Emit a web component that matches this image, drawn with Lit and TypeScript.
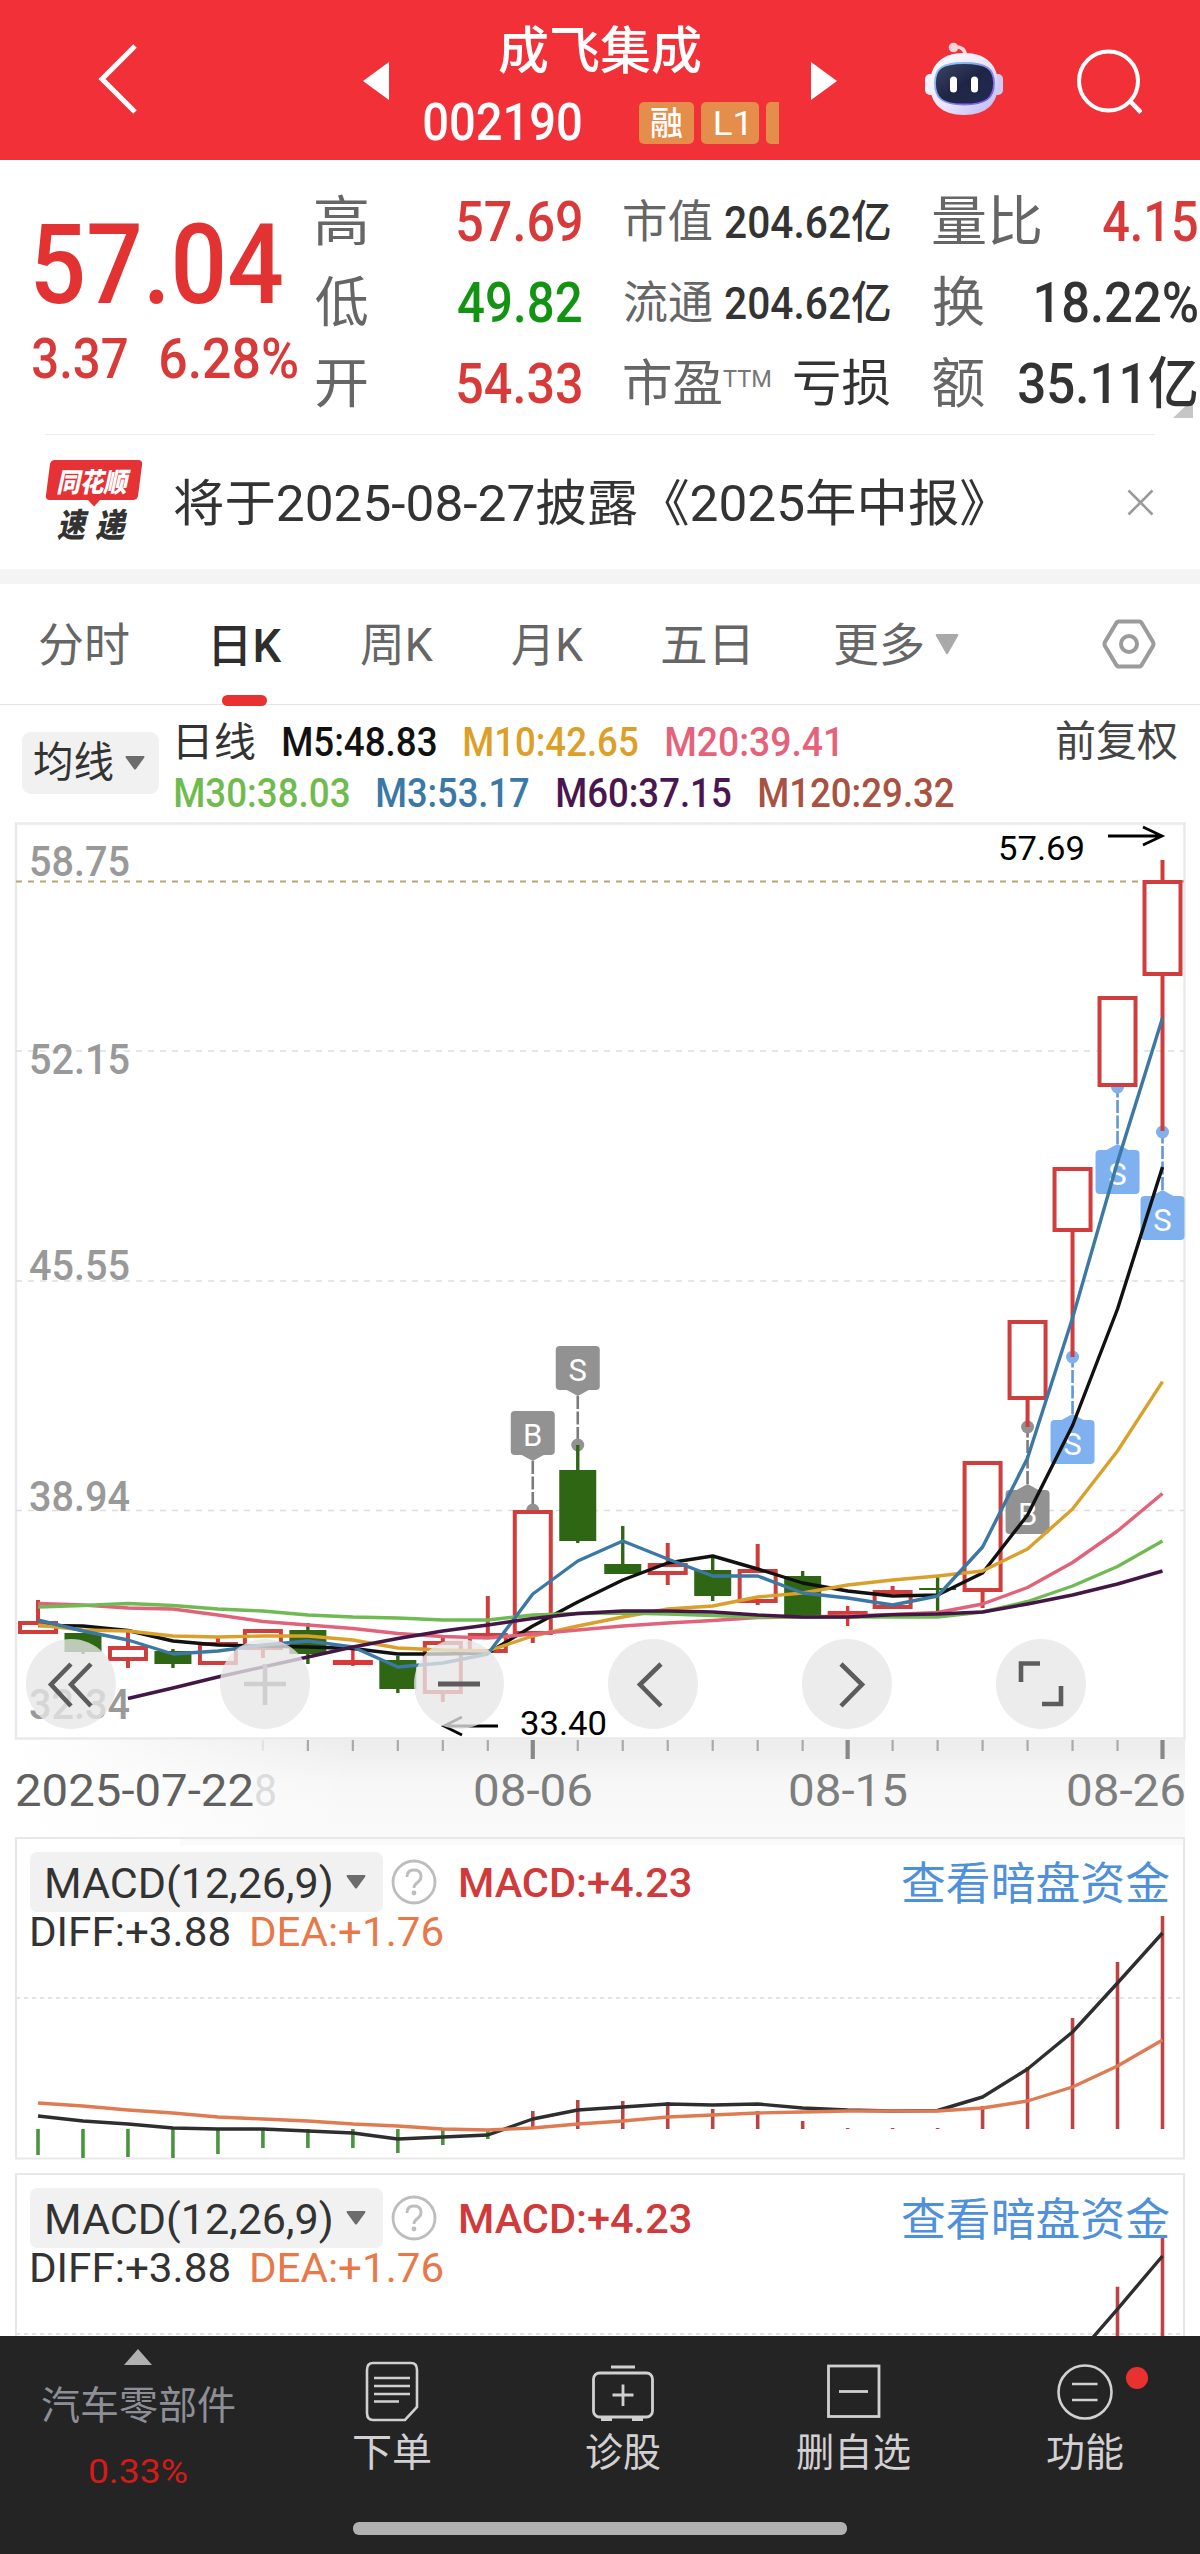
import { LitElement, html, svg, css, nothing } from "lit";
import { customElement, property, query } from "lit/decorators.js";

/** Text whose visible glyphs span exactly `w` pixels, starting at the box's left edge. */
@customElement("fit-text")
class FitText extends LitElement {
  @property() text = "";
  @property({ type: Number }) w = 100;
  @query("span") inner!: HTMLElement;

  static styles = css`
    :host { display: block; flex: none; white-space: nowrap; }
    span { display: inline-block; transform-origin: 0 50%; }
  `;

  updated() {
    this.style.width = this.w + "px";
    const cs = getComputedStyle(this);
    const ctx = document.createElement("canvas").getContext("2d")!;
    ctx.font = `${cs.fontStyle} ${cs.fontWeight} ${cs.fontSize} ${cs.fontFamily}`;
    const m = ctx.measureText(this.text);
    const ink = m.actualBoundingBoxLeft + m.actualBoundingBoxRight;
    const s = this.w / ink;
    this.inner.style.transform = `translateX(${m.actualBoundingBoxLeft * s}px) scaleX(${s})`;
    this.inner.style.marginRight = "-2000px";
  }

  render() {
    return html`<span>${this.text}</span>`;
  }
}

const t = (text: string, w: number, cls = "") => html`<fit-text class=${cls} .text=${text} .w=${w}></fit-text>`;

const X = (i: number) => 38 + 44.98 * i;
const line = (ys: number[], color: string, start = 0) =>
  svg`<polyline fill="none" stroke=${color} stroke-width="3.4" stroke-linejoin="round" points=${ys.map((y, i) => `${X(i + start)},${y}`).join(" ")} />`;

// kind, body top, body bottom, wick top, wick bottom
type Candle = ["r" | "g" | "f", number, number, number, number];
const candles: Candle[] = [
  ["r", 1621, 1634, 1600, 1634], ["g", 1633, 1652, 1633, 1654], ["r", 1646, 1661, 1632, 1668],
  ["g", 1651, 1664, 1649, 1668], ["r", 1642, 1665, 1638, 1665], ["r", 1629, 1650, 1629, 1658],
  ["g", 1630, 1654, 1623, 1664], ["f", 1660, 1665, 1648, 1666], ["g", 1660, 1689, 1656, 1693],
  ["r", 1641, 1694, 1636, 1702], ["r", 1633, 1653, 1596, 1653], ["r", 1510, 1635, 1510, 1643],
  ["g", 1470, 1541, 1445, 1543], ["g", 1564, 1574, 1526, 1574], ["r", 1563, 1575, 1543, 1585],
  ["g", 1570, 1596, 1556, 1601], ["r", 1569, 1603, 1544, 1605], ["g", 1576, 1616, 1571, 1616],
  ["f", 1611, 1616, 1606, 1626], ["r", 1590, 1609, 1586, 1609], ["g", 1588, 1590, 1576, 1613],
  ["r", 1461, 1592, 1461, 1608], ["r", 1320, 1400, 1320, 1427], ["r", 1167, 1232, 1167, 1357],
  ["r", 996, 1087, 996, 1087], ["r", 880, 976, 860, 1131],
];

const ma3 = [1620, 1631, 1640, 1654, 1651, 1645, 1641, 1647, 1667, 1663, 1654, 1594, 1561, 1541, 1559, 1576, 1576, 1593, 1598, 1605, 1596, 1547, 1458, 1318, 1162, 1018];
const ma5 = [1625.5, 1626, 1630.5, 1641, 1645, 1646, 1647, 1648.5, 1654, 1654, 1653, 1626, 1602, 1580, 1563, 1556, 1569, 1583, 1591, 1596, 1595, 1573, 1515, 1425.5, 1309, 1167];
const ma10 = [1625, 1630, 1631, 1636, 1637, 1636, 1636, 1640, 1648, 1650, 1651, 1636, 1626, 1617, 1609, 1606, 1597, 1593, 1585, 1580, 1576, 1571, 1549, 1509, 1451, 1381.6];
const ma20 = [1603.5, 1605, 1608, 1609, 1615, 1621.5, 1625, 1628.5, 1633.5, 1636.5, 1638, 1634, 1630, 1626, 1623, 1620.5, 1617.5, 1617, 1616, 1614.5, 1612.5, 1604, 1587.5, 1562.5, 1531, 1493.5];
const ma30 = [1607, 1605.5, 1603.5, 1605.5, 1609, 1611, 1615, 1617, 1618, 1620, 1620, 1615, 1613.5, 1613, 1614, 1615.5, 1617, 1617, 1617, 1617, 1617, 1612, 1601.5, 1586, 1566.5, 1541];
const ma60 = [1698.5, 1688, 1677, 1667, 1657, 1647, 1638.5, 1631, 1625, 1618.5, 1613.5, 1611, 1611, 1612, 1615, 1617, 1617, 1614.7, 1614, 1612, 1604, 1595, 1584, 1571];

const macdBars = [2155, 2158, 2157, 2158, 2154, 2148, 2148, 2148, 2153, 2145, 2139, 2111, 2100, 2101, 2102, 2109, 2111, 2121, 2128, 2128, 2128, 2106, 2067, 2018, 1962, 1916];
const diff = [2116, 2121, 2124, 2128, 2129, 2129, 2131, 2133, 2139, 2137, 2135, 2119, 2110, 2107, 2104, 2105, 2104, 2108, 2110, 2111, 2110.5, 2097, 2069, 2032, 1983, 1933];
const dea = [2103, 2106, 2110, 2113, 2117, 2119, 2121, 2124, 2126, 2129, 2130, 2128, 2124, 2121, 2117, 2115, 2113, 2112, 2111, 2111, 2111, 2108, 2101, 2087, 2066, 2040];

const RED = "#cf3e3c";
const GREEN = "#2f6613";

function candle([kind, top, bottom, high, low]: Candle, i: number) {
  const x = X(i);
  if (kind === "r") {
    return svg`<path d="M${x} ${high}V${top}M${x} ${bottom}V${low}" stroke=${RED} stroke-width="4" />
      <rect x=${x - 18} y=${top + 2} width="36" height=${bottom - top - 4} fill="#fff" stroke=${RED} stroke-width="4" />`;
  }
  const color = kind === "g" ? GREEN : "#dc3636";
  const half = kind === "g" ? 18.5 : 20;
  return svg`<path d="M${x} ${high}V${low}" stroke=${color} stroke-width="3.4" />
    <rect x=${x - half} y=${top} width=${half * 2} height=${bottom - top} fill=${color} />`;
}

function marker(i: number, letter: string, dot: number, boxTop: number, color: string, stem: string) {
  const x = X(i);
  const below = boxTop > dot;
  const edge = below ? boxTop : boxTop + 44;
  const tip = below ? boxTop - 6 : boxTop + 50;
  return svg`<path d="M${x} ${tip}V${dot}" stroke=${stem} stroke-width="2.6" stroke-dasharray="13 2.5" />
    <circle cx=${x} cy=${dot} r="6.5" fill=${color} />
    <rect x=${x - 22} y=${boxTop} width="44" height="44" rx="4" fill=${color} />
    <path d="M${x - 11} ${edge}L${x} ${tip}L${x + 11} ${edge}Z" fill=${color} />
    <text x=${x} y=${boxTop + 35} text-anchor="middle" font-size="31" fill="#fff">${letter}</text>`;
}

const label = (s: string, x: number, y: number, w: number, size: number, fill: string, weight = 500) =>
  svg`<text x=${x} y=${y} font-size=${size} font-weight=${weight} fill=${fill} textLength=${w} lengthAdjust="spacingAndGlyphs">${s}</text>`;

@customElement("k-chart")
class KChart extends LitElement {
  static styles = css`
    :host { display: grid; height: 1017px; }
    .plot { grid-area: 1 / 1; display: block; }
    .controls { grid-area: 1 / 1; display: flex; gap: 104px; padding: 819px 0 0 26px; height: 90px; }
    .ctl { width: 90px; height: 90px; flex: none; border-radius: 50%; background: rgba(231, 231, 231, 0.78); }
    .ctl svg { display: block; fill: none; stroke: #5c5c5c; stroke-width: 4.6; }
    .ctl .faint { stroke: #cfcfcf; }
  `;

  render() {
    const icons = [
      svg`<path d="M45 25L25 45.500L45 67M65 25L45 45.500L65 67" />`,
      svg`<path class="faint" d="M24 45H66M45 25V66" />`,
      svg`<path stroke-width="5" d="M24 45H66" />`,
      svg`<path d="M53 25L32 45.500L53 67" />`,
      svg`<path d="M39 25L60 45.500L39 67" />`,
      svg`<path d="M44 24.500H25V43M65 47V65H46" />`,
    ];
    return html`
      <svg class="plot" width="1200" height="1017" viewBox="0 820 1200 1017" font-family="Roboto, 'Noto Sans CJK SC', sans-serif">
        <defs>
          <linearGradient id="shade" x1="0" y1="0" x2="0" y2="1">
            <stop offset="0" stop-color="#ececec" /><stop offset=".45" stop-color="#f7f7f7" /><stop offset="1" stop-color="#fafafa" />
          </linearGradient>
          <linearGradient id="fade" x1="0" y1="0" x2="1" y2="0">
            <stop offset="0" stop-color="#fff" /><stop offset="1" stop-color="#fff" stop-opacity="0" />
          </linearGradient>
        </defs>
        <rect x="15" y="1740" width="1170" height="97" fill="url(#shade)" />
        <rect x="15" y="1740" width="340" height="97" fill="url(#fade)" />
        <rect x="16" y="823.500" width="1168.500" height="915" fill="#fff" stroke="#e9e9e9" stroke-width="2.400" />
        <g stroke="#dedede" stroke-width="1.500" stroke-dasharray="6 6">
          <path d="M16 1051H1184M16 1281H1184M16 1510.500H1184" />
        </g>
        <path d="M16 881.500H1184" stroke="#b3a873" stroke-width="1.800" stroke-dasharray="6 6" />
        ${label("58.75", 29, 876, 101, 43, "#999")}
        ${label("52.15", 29, 1074, 101, 43, "#999")}
        ${label("45.55", 29, 1280, 101, 43, "#999")}
        ${label("38.94", 29, 1511, 101, 43, "#999")}
        ${label("32.34", 29, 1719, 101, 43, "#999")}
        ${marker(11, "B", 1510, 1411, "#929292", "#7b7b7b")}
        ${marker(12, "S", 1445, 1346, "#929292", "#7b7b7b")}
        ${marker(22, "B", 1427, 1490, "#929292", "#7b7b7b")}
        ${marker(23, "S", 1357, 1420, "#7fb1f0", "#5f97dc")}
        ${marker(24, "S", 1087, 1150, "#7fb1f0", "#5f97dc")}
        ${marker(25, "S", 1132, 1196, "#7fb1f0", "#5f97dc")}
        ${candles.map(candle)}
        ${line(ma5, "#111")} ${line(ma10, "#d9a02c")} ${line(ma20, "#e0637a")}
        ${line(ma30, "#6fba52")} ${line(ma3, "#3c78a4")} ${line(ma60, "#431646", 2)}
        ${label("57.69", 998, 860, 87, 33, "#000", 400)}
        ${label("33.40", 520, 1735, 87, 33, "#000", 400)}
        <path d="M1108 836H1162M1143 827L1162 836L1143 845M498 1726H444M462 1717L444 1726L462 1735" fill="none" stroke="#000" stroke-width="2.800" />
        ${[5, 6, 7, 8, 9, 10, 12, 13, 14, 15, 16, 17, 19, 20, 21, 22, 23, 24].map(
          (i) => svg`<path d="M${X(i)} 1740V1751" stroke=${i === 5 ? "#e2e2e2" : "#a9a9a9"} stroke-width="2.200" />`
        )}
        ${[11, 18, 25].map((i) => svg`<path d="M${X(i)} 1740V1759" stroke="#888" stroke-width="4.200" />`)}
        ${label("2025-07-22", 15, 1806, 239, 45, "#606060", 400)}
        ${label("8", 254, 1806, 23, 45, "#dcdcdc", 400)}
        ${label("08-06", 473, 1806, 120, 45, "#7e7e7e", 400)}
        ${label("08-15", 788, 1806, 120, 45, "#7e7e7e", 400)}
        ${label("08-26", 1066, 1806, 120, 45, "#7e7e7e", 400)}
      </svg>
      <div class="controls">
        ${icons.map((icon) => html`<div class="ctl"><svg width="90" height="90" viewBox="0 0 90 90">${icon}</svg></div>`)}
      </div>
    `;
  }
}

@customElement("macd-panel")
class MacdPanel extends LitElement {
  @property({ type: Boolean }) second = false;

  static styles = css`
    :host { display: grid; width: 1170px; height: 323px; flex: none; margin-left: 15px; }
    .plot { grid-area: 1 / 1; display: block; }
    .head { grid-area: 1 / 1; padding: 15px 16px 0 15px; color: #333; font-size: 41px; }
    .row { display: flex; align-items: center; height: 60px; }
    .pick { display: flex; align-items: center; box-sizing: border-box; width: 353px; height: 60px; padding-left: 17px; background: #f1f1f1; border-radius: 7px; gap: 15px; font-size: 42px; font-weight: 400; }
    .pick fit-text { padding-top: 3px; }
    .pick svg { display: block; }
    .help { margin-left: 8px; display: block; }
    .macd { margin-left: 23px; padding-top: 2px; color: #d03a3a; font-weight: 500; }
    .link { margin-left: auto; margin-top: -3px; color: #4f90dc; font-size: 45px; }
    .values { display: flex; gap: 23px; height: 40px; line-height: 40px; margin-left: 2px; font-weight: 400; }
    .dea { color: #e8784a; }
  `;

  render() {
    const fy = (y: number) => (this.second ? 1902 + (y - 1916) * 1.06 : y);
    const base = fy(2129);
    return html`
      <svg class="plot" width="1170" height="323" viewBox="15 1837 1170 323">
        ${this.second ? nothing : svg`<rect x="180" y="1838" width="1005" height="7" fill="#fafafa" />`}
        <rect x="16" y="1838" width="1168" height="320.500" fill="none" stroke="#e8e8e8" stroke-width="2" />
        <path d="M16 1998H1184" stroke="#e4e4e4" stroke-width="2" stroke-dasharray="4 4" />
        ${macdBars.map((y, i) => svg`<path d="M${X(i)} ${base}V${fy(y)}" stroke=${y > 2129 ? "#4a9440" : "#bd4444"} stroke-width="3.600" />`)}
        ${line(diff.map(fy), "#2e2e2e")}
        ${line(dea.map(fy), "#df7b52")}
      </svg>
      <div class="head">
        <div class="row">
          <div class="pick">
            ${t("MACD(12,26,9)", 284)}
            <svg width="20" height="14" viewBox="0 0 20 14"><path d="M1 0H19Q20 0 19 2L11 13Q10 14 9 13L1 2Q0 0 1 0Z" fill="#6c6c6c" /></svg>
          </div>
          <svg class="help" width="46" height="54" viewBox="0 0 46 54">
            <circle cx="23" cy="27" r="21" fill="none" stroke="#bdbdbd" stroke-width="2.800" />
            <path d="M16 22Q16 15 23 15Q30 15 30 21.500Q30 25 26.500 27.500Q23 30 23 33" fill="none" stroke="#bdbdbd" stroke-width="2.800" />
            <circle cx="23" cy="38" r="2.400" fill="#bdbdbd" />
          </svg>
          ${t("MACD:+4.23", 231, "macd")}
          ${t("查看暗盘资金", 267, "link")}
        </div>
        <div class="values">${t("DIFF:+3.88", 197)} ${t("DEA:+1.76", 191, "dea")}</div>
      </div>
    `;
  }
}

@customElement("app-root")
class AppRoot extends LitElement {
  static styles = css`
    :host { display: flex; flex-direction: column; width: 1200px; height: 2554px; overflow: hidden; background: #fff; color: #333; font-family: Roboto, "Noto Sans CJK SC", sans-serif; }
    * { box-sizing: border-box; }
    svg { display: block; flex: none; }
    .page { height: 2336px; flex: none; overflow: hidden; display: flex; flex-direction: column; }

    .header { height: 160px; flex: none; background: #f23038; color: #fff; display: flex; align-items: flex-start; }
    .back { margin: 44px 0 0 98px; }
    .prev { margin: 62px 0 0 226px; }
    .next { margin: 62px 0 0 32px; }
    .bot { margin: 42px 0 0 87px; }
    .search { margin: 48px 0 0 72px; }
    .title { margin-left: 35px; width: 355px; display: flex; flex-direction: column; }
    .name { margin: 22px 0 0 75px; font-size: 51px; line-height: 60px; font-weight: 500; }
    .sub { display: flex; align-items: center; height: 82px; font-size: 51px; font-weight: 500; line-height: 84px; }
    .sep { width: 1px; height: 36px; margin: 0 41px 0 17px; background: #e0464b; }
    .tag { height: 42px; line-height: 43px; border-radius: 5px; background: #e58d4a; margin-right: 7px; font-size: 33px; font-weight: 500; display: flex; justify-content: center; flex: none; }
    .t1 { width: 55px; }
    .t2 { width: 58px; font-weight: 400; }
    .t3 { width: 13px; margin: 0; border-radius: 5px 0 0 5px; }

    .quote { height: 274px; flex: none; padding: 22px 3px 0 33px; display: flex; font-size: 56px; line-height: 81px; }
    .price { width: 283px; padding-top: 28px; color: #e23232; font-weight: 500; }
    .big { font-size: 111px; line-height: 110px; margin-left: 2px; }
    .chg { display: flex; gap: 34px; line-height: 78px; color: #d83a3a; }
    .col { width: 266px; margin-right: 43px; }
    .col:last-child { width: 264px; margin: 0; }
    .cell { display: flex; justify-content: space-between; align-items: center; height: 81px; color: #333; font-weight: 500; }
    .k { color: #666; font-weight: 400; font-size: 54px; }
    .mid .cell { font-size: 45px; }
    .mid .k { font-size: 45px; }
    .mid .pe { font-size: 50px; }
    .mid .ttm { font-size: 24px; line-height: 24px; margin: 0 24px 11px 1px; color: #777; font-weight: 400; }
    .mid .thin { font-weight: 400; font-size: 50px; }
    .up { color: #d83a3a; }
    .down { color: #129412; }
    .corner { margin: -26px 4px 0 auto; }

    .news { height: 135px; flex: none; margin: 0 45px; border-top: 1.500px solid #ececec; display: flex; align-items: center; }
    .logo { width: 98px; height: 80px; margin-top: -4px; display: grid; }
    .logo svg { grid-area: 1 / 1; }
    .logo-text { grid-area: 1 / 1; font-style: italic; font-weight: 900; padding-left: 12px; color: #333; }
    .l1 { color: #fff; font-size: 27px; line-height: 38px; margin-top: 4px; font-weight: 800; }
    .l2 { display: flex; gap: 6px; font-size: 33px; line-height: 34px; margin-top: 7px; }
    .headline { font-size: 50px; margin: 4px 0 0 31px; line-height: 60px; }
    .close { margin: 0 1px 0 auto; }

    .band { height: 15px; flex: none; background: #f4f4f4; }
    .tabs { height: 121px; flex: none; border-bottom: 1.500px solid #e6e6e6; display: flex; align-items: center; padding: 0 44px 0 40px; color: #666; font-size: 46px; line-height: 120px; }
    .tabs > fit-text { padding-top: 2px; }
    .tab { margin-right: 79px; }
    .tab.first { margin-right: 85px; }
    .active { display: grid; width: 68px; color: #2e2e2e; font-weight: 500; height: 120px; justify-items: center; }
    .active > * { grid-area: 1 / 1; }
    .active > fit-text { padding-top: 2px; }
    .mark { align-self: end; width: 45px; height: 11px; margin-right: 7px; border-radius: 6px; background: #e93131; }
    .more { margin: 0 12px 0 8px; }
    .gear { margin-left: auto; }

    .legend { height: 115px; flex: none; display: flex; padding: 12px 23px 0 22px; font-size: 40px; font-weight: 500; line-height: 51px; }
    .ma { width: 137px; height: 62px; margin-top: 15px; border-radius: 9px; background: #f1f1f1; display: flex; align-items: center; padding-left: 12px; gap: 12px; font-size: 42px; line-height: 64px; font-weight: 400; }
    .rows { margin-left: 16px; }
    .lrow { display: flex; gap: 28px; height: 51px; }
    .lrow .day { margin-left: 4px; font-weight: 400; }
    .adj { margin-left: auto; font-size: 42px; font-weight: 400; color: #444; line-height: 49px; }
    .c5 { color: #111; } .c10 { color: #dd9f27; } .c20 { color: #e5627a; } .c30 { color: #70bb4e; }
    .c3 { color: #3a78a6; } .c60 { color: #4a164f; } .c120 { color: #a85242; }

    k-chart { flex: none; }
    .gap { height: 13px; flex: none; }

    .bottom { height: 218px; flex: none; background: #242424; color: #d2d0d2; display: flex; flex-direction: column; align-items: center; font-size: 39px; }
    .items { display: flex; width: 1200px; height: 186px; }
    .item { width: 231px; display: flex; flex-direction: column; align-items: center; padding-top: 24px; }
    .item .cap { margin-top: 8px; line-height: 46px; }
    .sector { width: 276px; padding-top: 13px; color: #8e8e98; }
    .sector .nm { margin-top: 17px; line-height: 48px; }
    .sector .pct { color: #d41a1a; font-size: 34px; line-height: 40px; margin-top: 21px; }
    .home { width: 494px; height: 13px; border-radius: 6px; background: #b1b1b1; }
  `;

  render() {
    const cell = (k: string, kw: number, v: string, vw: number, cls = "") =>
      html`<div class="cell">${t(k, kw, "k")}${t(v, vw, cls)}</div>`;
    return html`
      <div class="page">
        <div class="header">
          <svg class="back" width="39" height="70" viewBox="98 44 39 70"><path d="M135 46L102 79L135 112" fill="none" stroke="#fff" stroke-width="5" /></svg>
          <svg class="prev" width="26" height="38" viewBox="0 0 26 38"><path d="M0 19L26 0V38Z" fill="#fff" /></svg>
          <div class="title">
            ${t("成飞集成", 202, "name")}
            <div class="sub">
              ${t("002190", 157)}
              <div class="sep"></div>
              <div class="tag t1">${t("融", 31)}</div>
              <div class="tag t2">${t("L1", 31)}</div>
              <div class="tag t3"></div>
            </div>
          </div>
          <svg class="next" width="26" height="38" viewBox="0 0 26 38"><path d="M26 19L0 0V38Z" fill="#fff" /></svg>
          <svg class="bot" width="80" height="75" viewBox="923 42 80 75">
            <defs>
              <linearGradient id="hd" x1="0" y1="0" x2="1" y2="1"><stop offset="0" stop-color="#fff" /><stop offset=".55" stop-color="#e9e4fa" /><stop offset="1" stop-color="#b9b4f0" /></linearGradient>
              <linearGradient id="vz" x1="0" y1="0" x2="1" y2="1"><stop offset="0" stop-color="#3d4468" /><stop offset=".5" stop-color="#1e2544" /><stop offset="1" stop-color="#232a55" /></linearGradient>
              <linearGradient id="rim" x1="0" y1="0" x2="1" y2="1"><stop offset="0" stop-color="#8fd4f5" /><stop offset="1" stop-color="#7a4fe0" /></linearGradient>
            </defs>
            <path d="M953 47Q964 46 964.500 56" fill="none" stroke="#fbd9df" stroke-width="3.500" />
            <circle cx="952.500" cy="47.500" r="4.800" fill="#fbd3d9" />
            <rect x="924" y="74" width="12" height="21" rx="5" fill="#f3effc" />
            <rect x="990" y="74" width="12" height="21" rx="5" fill="#cfc9f5" />
            <path d="M963 53C986 53 997 66 997 84C997 104 985 115 963 115C941 115 929 104 929 84C929 66 940 53 963 53Z" fill="url(#hd)" />
            <path d="M963 63C986 63 993 69 993 83C993 98 985 104.500 963 104.500C941 104.500 934 98 934 83C934 69 940 63 963 63Z" fill="url(#vz)" stroke="url(#rim)" stroke-width="1.800" />
            <rect x="949" y="76.500" width="7" height="16" rx="3.500" fill="#fff" /><rect x="970" y="76.500" width="7" height="16" rx="3.500" fill="#fff" />
          </svg>
          <svg class="search" width="66" height="66" viewBox="1075 47 66 66"><circle cx="1107.500" cy="80" r="29.500" fill="none" stroke="#fff" stroke-width="4" /><path d="M1128 99L1140 111.500" stroke="#fff" stroke-width="4.500" /></svg>
        </div>

        <div class="quote">
          <div class="price">
            ${t("57.04", 247, "big")}
            <div class="chg">${t("3.37", 94)}${t("6.28%", 136)}</div>
          </div>
          <div class="col">
            ${cell("高", 51, "57.69", 123, "up")} ${cell("低", 52, "49.82", 123, "down")} ${cell("开", 51, "54.33", 123, "up")}
          </div>
          <div class="col mid">
            ${cell("市值", 88, "204.62亿", 165)} ${cell("流通", 88, "204.62亿", 165)}
            <div class="cell">${t("市盈", 97, "k pe")}${t("TTM", 47, "ttm")}${t("亏损", 96, "thin")}</div>
          </div>
          <div class="col">
            ${cell("量比", 107, "4.15", 94, "up")} ${cell("换", 51, "18.22%", 161)} ${cell("额", 51, "35.11亿", 178)}
            <svg class="corner" width="20" height="19" viewBox="0 0 20 19"><path d="M0 19L20 0V19Z" fill="#c6c6c6" /></svg>
          </div>
        </div>

        <div class="news">
          <div class="logo">
            <svg width="98" height="80" viewBox="45 462 98 80"><path d="M55 462H138Q143 462 142 467L138 498Q137 502 133 502H100L94 508.500L88 502H50Q45 502 46 497L50 466Q51 462 55 462Z" fill="#e53235" /></svg>
            <div class="logo-text">
              ${t("同花顺", 74, "l1")}
              <div class="l2">${t("速", 32)}${t("递", 33)}</div>
            </div>
          </div>
          ${t("将于2025-08-27披露《2025年中报》", 810, "headline")}
          <svg class="close" width="27" height="27" viewBox="0 0 27 27"><path d="M1.500 1.500L25.500 25.500M25.500 1.500L1.500 25.500" stroke="#9a9a9a" stroke-width="2.600" /></svg>
        </div>

        <div class="band"></div>
        <div class="tabs">
          ${t("分时", 89, "tab first")}
          <div class="tab active">${t("日K", 68)}<div class="mark"></div></div>
          ${t("周K", 72, "tab")}${t("月K", 71, "tab")}${t("五日", 86, "tab")}${t("更多", 88, "more")}
          <svg width="24" height="21" viewBox="0 0 24 21"><path d="M2 0H22Q24 0 23 2L13 19.500Q12 21 11 19.500L1 2Q0 0 2 0Z" fill="#a9a9a9" /></svg>
          <svg class="gear" width="54" height="50" viewBox="0 0 54 50">
            <path d="M17 2.500H37Q39 2.500 40 4.500L51 23Q52 25 51 27L40 45.500Q39 47.500 37 47.500H17Q15 47.500 14 45.500L3 27Q2 25 3 23L14 4.500Q15 2.500 17 2.500Z" fill="none" stroke="#9b9b9b" stroke-width="4" />
            <circle cx="27" cy="25" r="8" fill="none" stroke="#9b9b9b" stroke-width="4" />
          </svg>
        </div>

        <div class="legend">
          <div class="ma">${t("均线", 79)}<svg width="20" height="14" viewBox="0 0 20 14"><path d="M1 0H19Q20 0 19 2L11 13Q10 14 9 13L1 2Q0 0 1 0Z" fill="#6c6c6c" /></svg></div>
          <div class="rows">
            <div class="lrow">${t("日线", 76, "day")}${t("M5:48.83", 153, "c5")}${t("M10:42.65", 174, "c10")}${t("M20:39.41", 171, "c20")}</div>
            <div class="lrow">${t("M30:38.03", 174, "c30")}${t("M3:53.17", 152, "c3")}${t("M60:37.15", 174, "c60")}${t("M120:29.32", 195, "c120")}</div>
          </div>
          ${t("前复权", 120, "adj")}
        </div>

        <k-chart></k-chart>
        <macd-panel></macd-panel>
        <div class="gap"></div>
        <macd-panel .second=${true}></macd-panel>
      </div>

      <div class="bottom">
        <div class="items">
          <div class="item sector">
            <svg width="28" height="16" viewBox="0 0 28 16"><path d="M14 0L28 16H0Z" fill="#b0b0b0" /></svg>
            ${t("汽车零部件", 193, "nm")} ${t("0.33%", 98, "pct")}
          </div>
          <div class="item">
            <svg width="62" height="62" viewBox="360 2359 62 62" fill="none" stroke="#d0d0d0" stroke-width="2.600">
              <path d="M372 2362H410Q416 2362 416 2369V2406L404 2419H372Q366 2419 366 2412V2369Q366 2362 372 2362Z" />
              <path d="M373 2377H409M373 2385H409M373 2393H409M373 2400.500H398" />
            </svg>
            ${t("下单", 76, "cap")}
          </div>
          <div class="item">
            <svg width="64" height="62" viewBox="590 2359 64 62" fill="none" stroke="#d0d0d0" stroke-width="2.800">
              <rect x="592.500" y="2372" width="59" height="44" rx="6" />
              <path d="M610 2366H634M611.500 2394H632.500M622 2383.500V2405M600 2418.500H611M631 2418.500H642" />
            </svg>
            ${t("诊股", 74, "cap")}
          </div>
          <div class="item">
            <svg width="62" height="62" viewBox="822 2359 62 62" fill="none" stroke="#d0d0d0" stroke-width="2.800">
              <rect x="827.500" y="2365" width="50.500" height="50.500" /><path d="M838 2390.500H867" />
            </svg>
            ${t("删自选", 113, "cap")}
          </div>
          <div class="item">
            <svg width="130" height="62" viewBox="1019 2359 130 62" fill="none" stroke="#d0d0d0" stroke-width="2.600">
              <circle cx="1084" cy="2391" r="26.500" /><path d="M1071 2383H1096.500M1071 2399H1096.500" />
              <circle cx="1136" cy="2377" r="11" fill="#e93230" stroke="none" />
            </svg>
            ${t("功能", 76, "cap")}
          </div>
        </div>
        <div class="home"></div>
      </div>
    `;
  }
}
